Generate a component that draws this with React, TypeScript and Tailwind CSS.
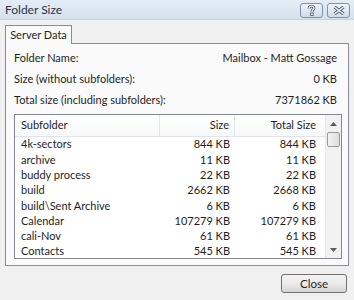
import React from "react";

const rows = [
  ["4k-sectors", "844 KB", "844 KB"],
  ["archive", "11 KB", "11 KB"],
  ["buddy process", "22 KB", "22 KB"],
  ["build", "2662 KB", "2668 KB"],
  ["build\\Sent Archive", "6 KB", "6 KB"],
  ["Calendar", "107279 KB", "107279 KB"],
  ["cali-Nov", "61 KB", "61 KB"],
  ["Contacts", "545 KB", "545 KB"],
];

const info = [
  ["Folder Name:", "Mailbox - Matt Gossage"],
  ["Size (without subfolders):", "0 KB"],
  ["Total size (including subfolders):", "7371862 KB"],
];

const App = () => {
  return (
    <div
      className="w-[354px] h-[300px] bg-[#f0f0f0] overflow-hidden text-[11px] text-[#1e1e1e]"
      style={{ fontFamily: "Lato, 'Liberation Sans', sans-serif" }}
    >
      {/* title bar */}
      <div className="h-[20px] flex items-center justify-between pl-[5px] pr-[4px] bg-gradient-to-b from-[#e4ecf6] to-[#d6e1ee] border-b border-[#c5d2e2]">
        <span className="text-[12px] text-[#2a3442]">Folder Size</span>
        <div className="flex gap-[4px] pt-[1px]">
          <div className="w-[23px] h-[15px] rounded-[3px] border border-[#7f91ab] bg-gradient-to-b from-[#eef3f9] to-[#cfdbea] flex items-center justify-center">
            <svg width="9" height="11" viewBox="0 0 9 11">
              <path d="M2 3.5 Q2 1.2 4.5 1.2 Q7 1.2 7 3.3 Q7 4.6 5.2 5.4 L5 7" fill="none" stroke="#4a5a70" strokeWidth="2.8" />
              <path d="M2 3.5 Q2 1.2 4.5 1.2 Q7 1.2 7 3.3 Q7 4.6 5.2 5.4 L5 7" fill="none" stroke="#f5f7fa" strokeWidth="1.2" />
              <rect x="3.6" y="8" width="2.6" height="2.6" fill="#f5f7fa" stroke="#4a5a70" strokeWidth="0.8" />
            </svg>
          </div>
          <div className="w-[23px] h-[15px] rounded-[3px] border border-[#7f91ab] bg-gradient-to-b from-[#eef3f9] to-[#cfdbea] flex items-center justify-center">
            <svg width="12" height="9" viewBox="0 0 12 9">
              <path d="M1.5 1 L10.5 8 M10.5 1 L1.5 8" stroke="#4a5a70" strokeWidth="3.2" />
              <path d="M1.5 1 L10.5 8 M10.5 1 L1.5 8" stroke="#f5f7fa" strokeWidth="1.5" />
            </svg>
          </div>
        </div>
      </div>

      {/* tabs + panel */}
      <div className="px-[5px] pt-[5px]">
        <div className="flex">
          <div className="relative z-10 w-[67px] h-[19px] bg-[#fafafa] border border-b-0 border-[#898c95] flex items-center justify-center">
            Server Data
          </div>
        </div>
        <div className="-mt-[1px] h-[223px] bg-[#fafafa] border border-[#898c95] px-[8px] pt-[4px]">
          {info.map(([label, value]) => (
            <div key={label} className="h-[21px] flex items-center justify-between pr-[3px]">
              <span>{label}</span>
              <span>{value}</span>
            </div>
          ))}

          {/* list view */}
          <div className="mt-[3px] h-[145px] w-[328px] bg-white border border-[#828790] flex overflow-hidden">
            <div className="w-[310px] flex flex-col">
              <div className="h-[22px] flex items-center border-b border-[#e0e3e8] bg-gradient-to-b from-white to-[#f7f8f9] shrink-0">
                <div className="w-[145px] h-full flex items-center pl-[6px] border-r border-[#e5e5e5]">
                  Subfolder
                </div>
                <div className="w-[75px] h-full flex items-center justify-end pr-[5px] border-r border-[#e5e5e5]">
                  Size
                </div>
                <div className="w-[90px] h-full flex items-center justify-end pr-[9px]">
                  Total Size
                </div>
              </div>
              {rows.map(([name, size, total]) => (
                <div key={name} className="h-[15.3px] flex items-center shrink-0">
                  <div className="w-[145px] pl-[6px]">{name}</div>
                  <div className="w-[75px] text-right pr-[5px]">{size}</div>
                  <div className="w-[90px] text-right pr-[9px]">{total}</div>
                </div>
              ))}
            </div>
            {/* scrollbar */}
            <div className="w-[16px] h-full bg-[#f2f2f2] border-l border-[#e8e8e8] flex flex-col items-center">
              <div className="h-[17px] w-full flex items-center justify-center">
                <svg width="7" height="4" viewBox="0 0 7 4">
                  <path d="M0 4 L3.5 0 L7 4 Z" fill="#5a5a5a" />
                </svg>
              </div>
              <div className="w-[13px] h-[15px] rounded-[2px] border border-[#9a9a9a] bg-gradient-to-r from-[#f4f4f4] to-[#dcdcdc]" />
              <div className="flex-1" />
              <div className="h-[17px] w-full flex items-center justify-center">
                <svg width="7" height="4" viewBox="0 0 7 4">
                  <path d="M0 0 L7 0 L3.5 4 Z" fill="#5a5a5a" />
                </svg>
              </div>
            </div>
          </div>
        </div>
      </div>

      {/* footer */}
      <div className="flex justify-end pr-[7px] pt-[8px]">
        <button className="w-[66px] h-[19px] rounded-[3px] border border-[#707070] bg-gradient-to-b from-[#f2f2f2] via-[#ebebeb] to-[#d6d6d6] text-[11.5px] flex items-center justify-center">
          Close
        </button>
      </div>
    </div>
  );
};

export default App;
